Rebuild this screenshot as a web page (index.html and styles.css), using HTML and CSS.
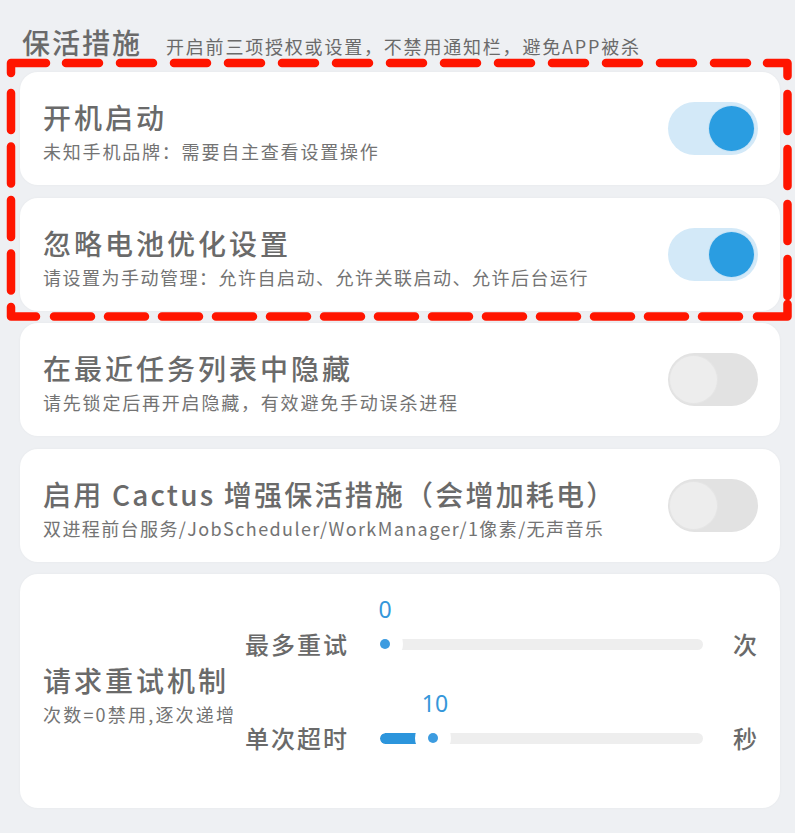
FILE: index.html
```html
<!DOCTYPE html>
<html lang="zh-CN">
<head>
<meta charset="utf-8">
<title>保活措施</title>
<link rel="stylesheet" href="styles.css">
</head>
<body>
<div class="page">
  <header class="section-head">
    <h1 class="section-title">保活措施</h1>
    <span class="section-note">开启前三项授权或设置，不禁用通知栏，避免APP被杀</span>
  </header>

  <div class="card">
    <div class="card-text">
      <div class="card-title">开机启动</div>
      <div class="card-sub">未知手机品牌：需要自主查看设置操作</div>
    </div>
    <div class="toggle on"><span class="knob"></span></div>
  </div>

  <div class="card">
    <div class="card-text">
      <div class="card-title">忽略电池优化设置</div>
      <div class="card-sub sub-tight">请设置为手动管理：允许自启动、允许关联启动、允许后台运行</div>
    </div>
    <div class="toggle on"><span class="knob"></span></div>
  </div>

  <div class="card">
    <div class="card-text">
      <div class="card-title">在最近任务列表中隐藏</div>
      <div class="card-sub">请先锁定后再开启隐藏，有效避免手动误杀进程</div>
    </div>
    <div class="toggle"><span class="knob"></span></div>
  </div>

  <div class="card">
    <div class="card-text">
      <div class="card-title title-mixed">启用 Cactus 增强保活措施（会增加耗电）</div>
      <div class="card-sub sub-mixed">双进程前台服务/JobScheduler/WorkManager/1像素/无声音乐</div>
    </div>
    <div class="toggle"><span class="knob"></span></div>
  </div>

  <div class="card card-retry">
    <div class="retry-text">
      <div class="card-title">请求重试机制</div>
      <div class="card-sub retry-sub">次数=0禁用,逐次递增</div>
    </div>
    <div class="retry-grid">
      <div class="retry-label">最多重试</div>
      <div class="slider">
        <div class="track"><div class="fill" style="width:0px"></div></div>
        <div class="thumb" style="left:5px"><span class="dot"></span></div>
        <div class="value" style="left:5px">0</div>
      </div>
      <div class="retry-unit">次</div>

      <div class="retry-label">单次超时</div>
      <div class="slider">
        <div class="track"><div class="fill" style="width:53px"></div></div>
        <div class="thumb" style="left:53px"><span class="dot"></span></div>
        <div class="value" style="left:55px">10</div>
      </div>
      <div class="retry-unit">秒</div>
    </div>
  </div>

  <svg class="highlight" width="795" height="833" viewBox="0 0 795 833" aria-hidden="true">
    <g fill="none" stroke="#ff1500" stroke-width="8.5" stroke-linecap="round" stroke-linejoin="round">
      <line x1="66" y1="63" x2="747" y2="63" stroke-dasharray="33 21"/>
      <line x1="54" y1="316.5" x2="739" y2="316.5" stroke-dasharray="37 17"/>
      <line x1="11" y1="93" x2="11" y2="291" stroke-dasharray="37 16.5"/>
      <line x1="787.5" y1="94" x2="787.5" y2="296" stroke-dasharray="37 18"/>
      <path d="M11 73 L11 63 L46 63"/>
      <path d="M767 63 L787.5 63 L787.5 76"/>
      <path d="M787.5 304 L787.5 316.5 L757 316.5"/>
      <path d="M11 307 L11 316.5 L36 316.5"/>
    </g>
  </svg>
</div>
</body>
</html>
```

FILE: styles.css
```css
* { box-sizing: border-box; }

html, body {
  margin: 0;
  padding: 0;
}

body {
  background: #eef0f3;
  font-family: "Noto Sans CJK SC", "Noto Sans", sans-serif;
  color: #666666;
  width: 795px;
  height: 833px;
  overflow: hidden;
}

.page {
  position: relative;
  padding: 0 15px 0 20px;
}

.section-head {
  display: flex;
  align-items: baseline;
  height: 72px;
  padding: 22px 0 0 2px;
}

.section-title {
  margin: 0;
  font-size: 28px;
  line-height: 40px;
  font-weight: 500;
  letter-spacing: 2px;
  color: #6a6a6a;
}

.section-note {
  margin-left: 24px;
  font-size: 18px;
  letter-spacing: 1.8px;
  color: #6a6a6a;
}

.card {
  display: flex;
  align-items: center;
  height: 113px;
  margin-bottom: 12.5px;
  padding: 0 22px 0 23px;
  background: #ffffff;
  border-radius: 18px;
  box-shadow: 0 0 3px rgba(0, 0, 0, 0.04);
}

.card-text {
  flex: 1;
  align-self: flex-start;
  padding-top: 27px;
}

.card-title {
  font-size: 28px;
  line-height: 36px;
  font-weight: 500;
  letter-spacing: 3px;
  color: #6a6a6a;
  white-space: nowrap;
}

.title-mixed {
  letter-spacing: 2.2px;
}

.card-sub {
  margin-top: 3px;
  font-size: 18px;
  line-height: 26px;
  letter-spacing: 1.8px;
  color: #737373;
  white-space: nowrap;
}

.sub-tight {
  letter-spacing: 1.5px;
}

.sub-mixed {
  letter-spacing: 1.4px;
}

.toggle {
  display: flex;
  align-items: center;
  justify-content: flex-start;
  width: 90px;
  height: 53px;
  padding: 0 2px;
  border-radius: 27px;
  background: #e2e2e2;
  flex-shrink: 0;
}

.toggle .knob {
  width: 47px;
  height: 47px;
  border-radius: 50%;
  background: #ededed;
  box-shadow: 0 0 0 1px #e5e5e5;
}

.toggle.on {
  justify-content: flex-end;
  padding: 0 4px;
  background: #d3e9f8;
}

.toggle.on .knob {
  width: 45px;
  height: 45px;
  background: #2a9de1;
  box-shadow: 0 0 0 1px #c6e3f6;
}

.card-retry {
  height: 234px;
  margin-bottom: 0;
}

.retry-text {
  width: 202px;
  padding-top: 6px;
}

.retry-sub {
  letter-spacing: 2.2px;
}

.retry-grid {
  display: grid;
  grid-template-columns: 105px 323px 24px;
  grid-template-rows: 94px 94px;
  column-gap: 30px;
  align-items: center;
}

.retry-label {
  font-size: 24px;
  line-height: 30px;
  font-weight: 500;
  letter-spacing: 2px;
  color: #6a6a6a;
  white-space: nowrap;
}

.retry-unit {
  font-size: 24px;
  line-height: 30px;
  font-weight: 500;
  color: #6a6a6a;
}

.slider {
  position: relative;
  height: 36px;
  display: flex;
  align-items: center;
}

.track {
  width: 100%;
  height: 11px;
  border-radius: 6px;
  background: #eeeeee;
  overflow: hidden;
}

.fill {
  height: 100%;
  background: #2c95dc;
  border-radius: 6px 0 0 6px;
}

.thumb {
  position: absolute;
  top: 0;
  width: 36px;
  height: 36px;
  margin-left: -18px;
  border-radius: 50%;
  background: #ffffff;
  display: flex;
  align-items: center;
  justify-content: center;
}

.dot {
  width: 10px;
  height: 10px;
  border-radius: 50%;
  background: #3d9ce0;
}

.value {
  position: absolute;
  top: -32px;
  transform: translateX(-50%);
  font-family: "Noto Sans", sans-serif;
  font-size: 23px;
  line-height: 30px;
  color: #3597da;
}

.highlight {
  position: absolute;
  left: 0;
  top: 0;
  pointer-events: none;
}
```
